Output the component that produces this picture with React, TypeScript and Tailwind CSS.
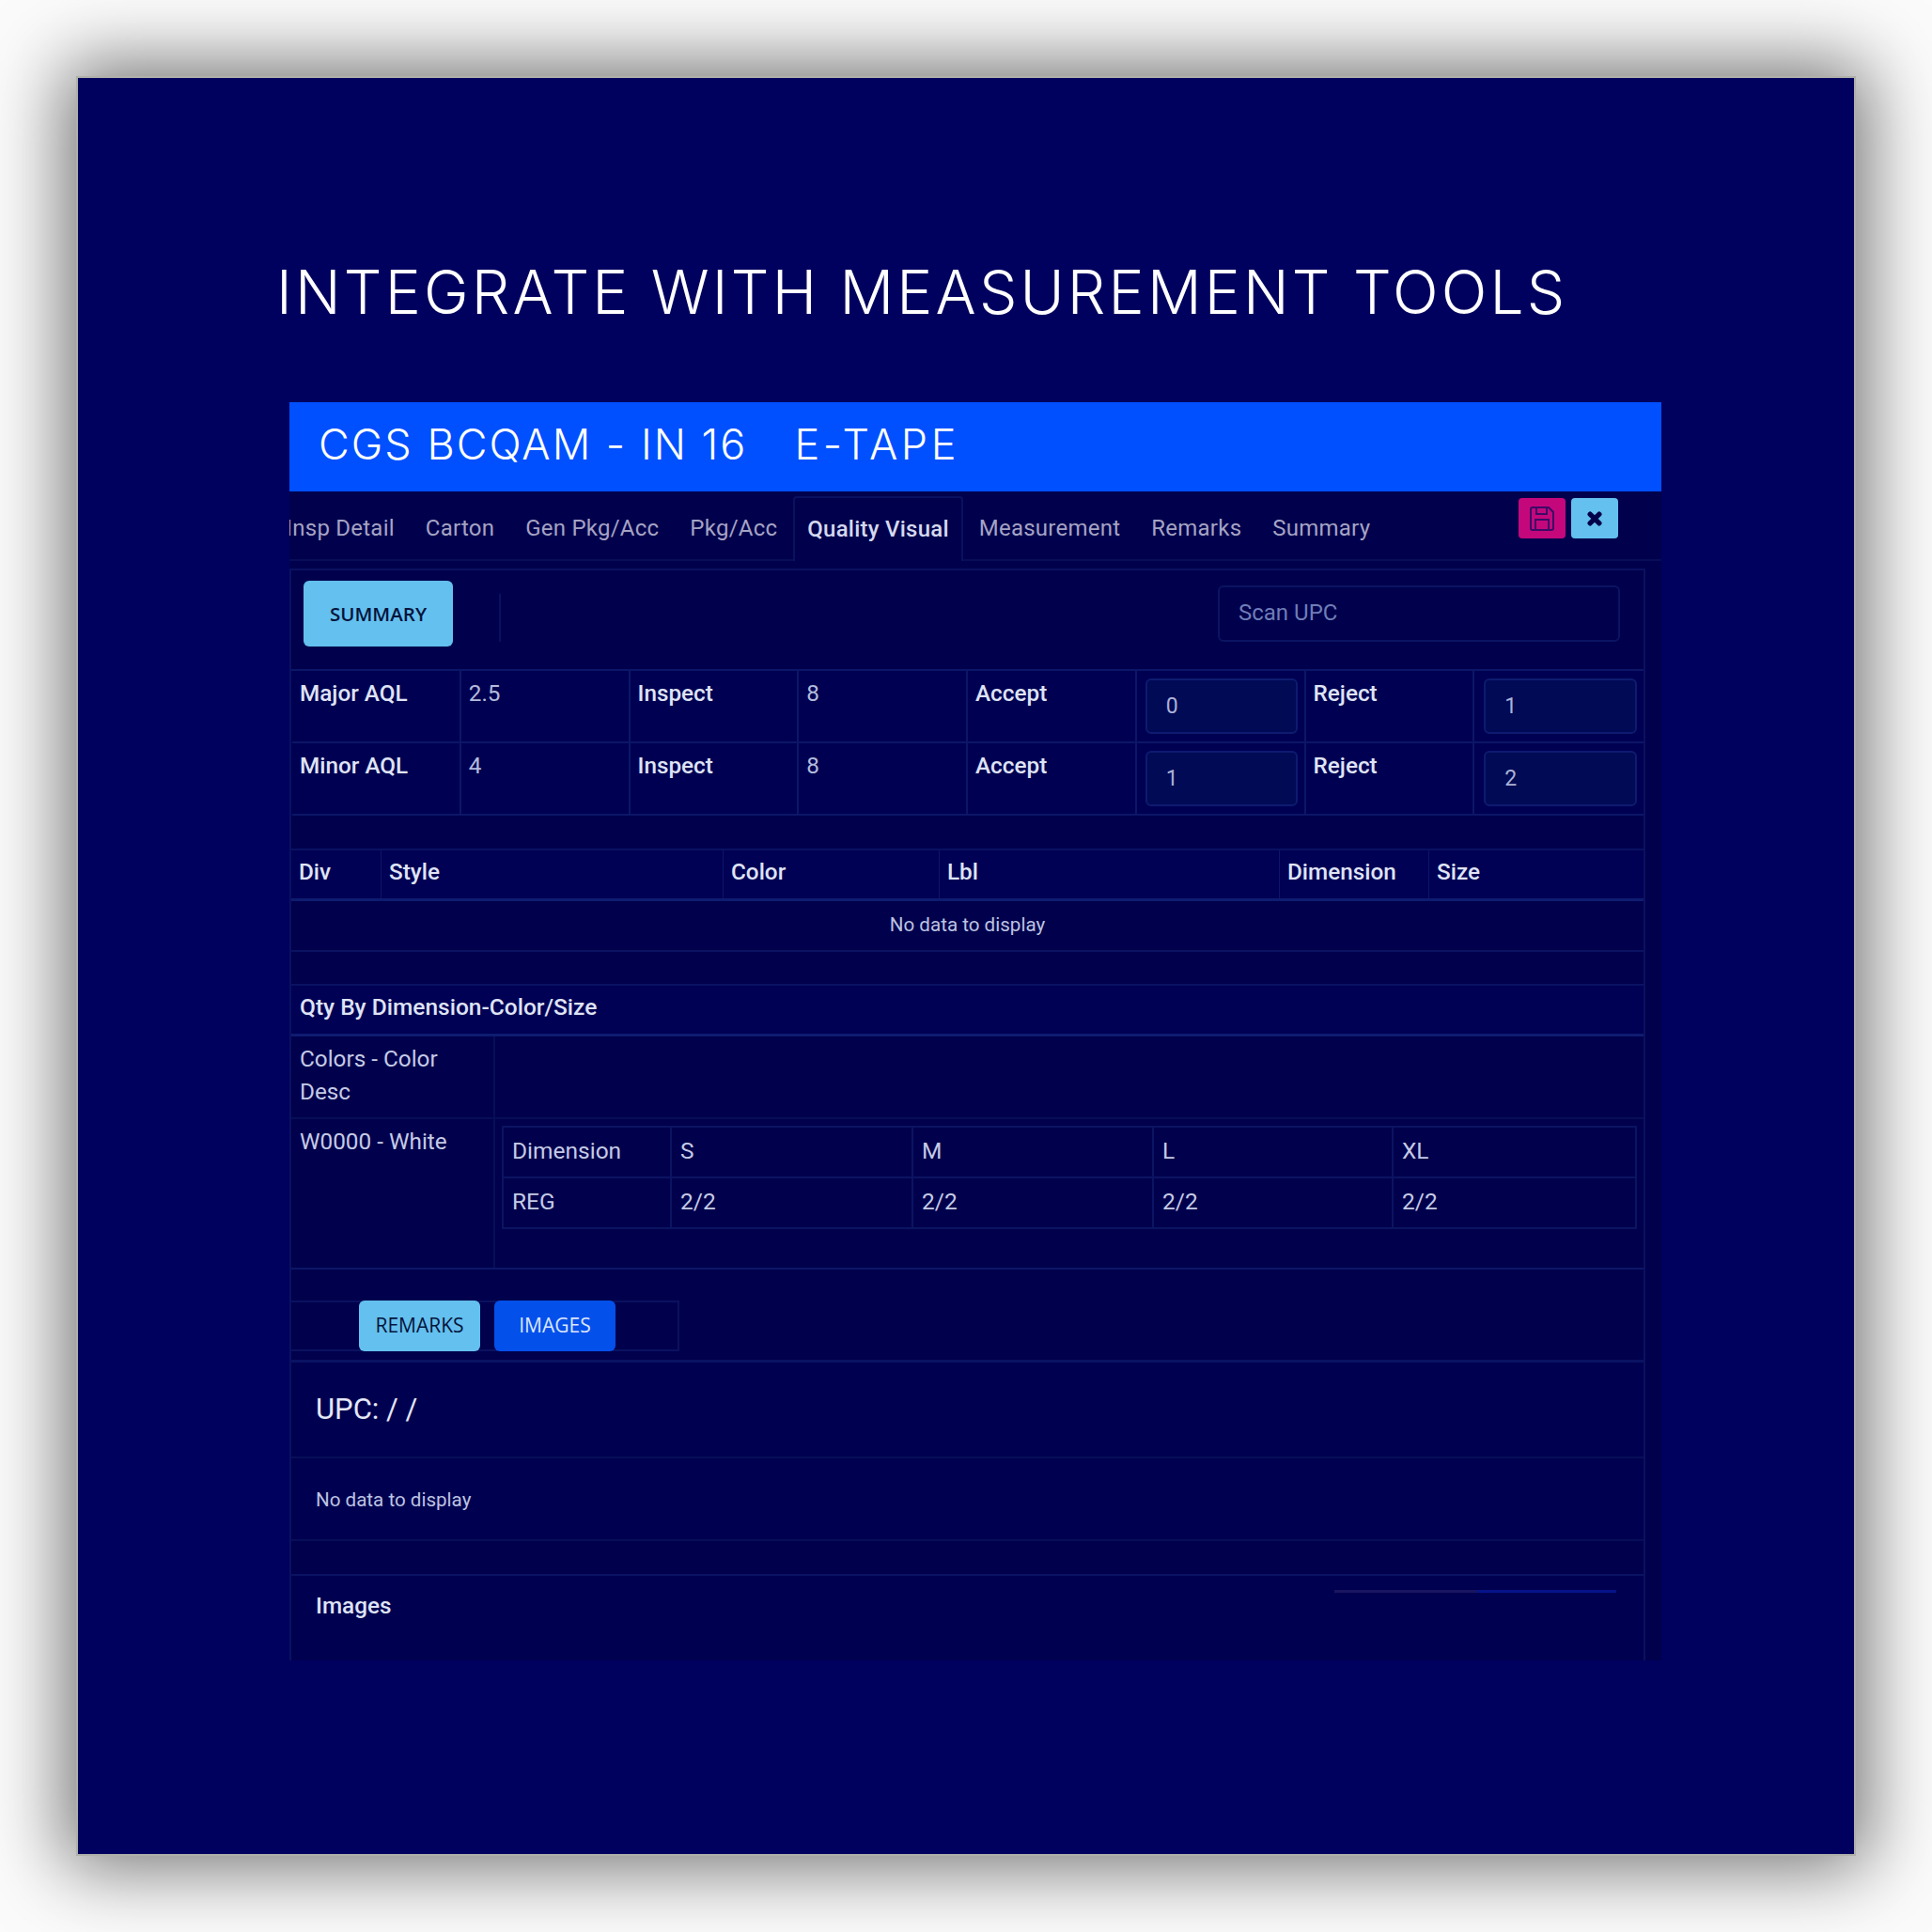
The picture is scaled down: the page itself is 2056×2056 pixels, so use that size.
import { FaTimes } from "react-icons/fa";

const tabs = ["Insp Detail", "Carton", "Gen Pkg/Acc", "Pkg/Acc", "Quality Visual", "Measurement", "Remarks", "Summary"];

function AqlRow({ name, aql, inspect, accept, reject }: { name: string; aql: string; inspect: string; accept: string; reject: string }) {
  const cell = "border-r-2 border-[#0c1668] pl-[8px] pr-[10px] pt-[10px] text-[24.3px] leading-[28px]";
  const box = "h-[59px] rounded-[6px] border-2 border-[#0d1b70] bg-[#000a55] px-[20px] text-[23px] leading-[55px] text-[#aab2d8]";
  return (
    <div className="ml-[1px] grid h-[77px] grid-cols-8 border-b-2 border-[#0c1668]">
      <div className={`${cell} font-medium text-[#dfe3f5]`}>{name}</div>
      <div className={`${cell} text-[#b4bbdc]`}>{aql}</div>
      <div className={`${cell} font-medium text-[#dfe3f5]`}>Inspect</div>
      <div className={`${cell} text-[#b4bbdc]`}>{inspect}</div>
      <div className={`${cell} font-medium text-[#dfe3f5]`}>Accept</div>
      <div className="border-r-2 border-[#0c1668] pl-[9px] pr-[7px] pt-[8px]">
        <div className={box}>{accept}</div>
      </div>
      <div className={`${cell} font-medium text-[#dfe3f5]`}>Reject</div>
      <div className="pl-[10px] pr-[7px] pt-[8px]">
        <div className={box}>{reject}</div>
      </div>
    </div>
  );
}

function SizeRow({ values, last }: { values: string[]; last?: boolean }) {
  return (
    <div className={`grid h-[54px] grid-cols-[179px_257px_256px_255px_257px] ${last ? "" : "border-b-2 border-[#0b1462]"}`}>
      {values.map((v, i) => (
        <div key={i} className={`px-[9px] text-[24.5px] leading-[50px] text-[#c5cae6] ${i < 4 ? "border-r-2 border-[#0b1462]" : ""}`}>
          {v}
        </div>
      ))}
    </div>
  );
}

export default function App() {
  return (
    <div className="h-[2056px] w-[2056px] bg-[#fbfbfb] p-[81px] font-['Roboto',sans-serif]">
      <div className="h-[1894px] w-[1894px] border-2 border-[#b0b0aa] bg-[#00005f] pl-[225px] pr-[205px] pt-[188px] shadow-[0_0_75px_12px_rgba(0,0,0,0.55)]">
        <h1 className="-ml-[14px] whitespace-nowrap font-['Inter',sans-serif] text-[64px] font-light leading-[80px] tracking-[0.05em] text-white">
          INTEGRATE WITH MEASUREMENT TOOLS
        </h1>

        <div className="mt-[77px] w-[1460px] overflow-hidden bg-[#00004c]">
          <div className="flex h-[95px] bg-[#0050ff] pl-[31px] font-['Inter',sans-serif] text-[45px] font-light leading-[90px] text-white">
            <span className="tracking-[0.045em]">CGS BCQAM - IN 16</span>
            <span className="ml-[50px] tracking-[0.08em]">E-TAPE</span>
          </div>

          <div className="flex h-[74px] items-start justify-between border-b-2 border-[#070d58] pr-[46px]">
            <div className="-ml-[20px] flex h-[74px] items-end">
              {tabs.map((t) =>
                t === "Quality Visual" ? (
                  <div key={t} className="h-[69px] rounded-t-[4px] border-x-2 border-t-2 border-[#0a1160] bg-[#00004c] px-[13.5px] text-[24px] font-medium leading-[66px] tracking-[0.01em] text-[#d5d9ef]">
                    {t}
                  </div>
                ) : (
                  <div key={t} className="h-[69px] px-[16.5px] text-[24px] leading-[69px] tracking-[0.01em] text-[#a5a3c4]">
                    {t}
                  </div>
                ),
              )}
            </div>
            <div className="mt-[7px] flex gap-[6px]">
              <div className="flex h-[43px] w-[50px] items-center justify-center rounded-[4px] bg-[#c4087c] text-[#3d0a66]">
                <svg width="28" height="28" viewBox="0 0 28 28" fill="none" stroke="currentColor" strokeWidth="2">
                  <path d="M4 2h17l5 5v17a2 2 0 0 1-2 2H4a2 2 0 0 1-2-2V4a2 2 0 0 1 2-2z" />
                  <path d="M8 2v7h11V2" />
                  <path d="M7 26V15h14v11" />
                </svg>
              </div>
              <div className="flex h-[43px] w-[50px] items-center justify-center rounded-[4px] bg-[#64c0ee] text-[#00004a]">
                <FaTimes size={20} stroke="currentColor" strokeWidth={40} />
              </div>
            </div>
          </div>

          <div className="mt-[8px] mr-[17px] border-l-2 border-r-2 border-t-2 border-[#0a1160]">
            <div className="flex h-[105px] items-start justify-between pl-[13px] pr-[25px]">
              <div className="flex">
                <div className="mt-[11px] flex h-[70px] w-[159px] items-center justify-center rounded-[6px] bg-[#64c0ee] font-['Open_Sans',sans-serif] text-[20.5px] font-semibold text-[#04143c]">
                  SUMMARY
                </div>
                <div className="ml-[49px] mt-[25px] h-[51px] w-[2px] bg-[#0a1160]" />
              </div>
              <div className="mt-[16px] h-[60px] w-[428px] rounded-[6px] border-2 border-[#0b1462] bg-[#00004c] px-[20px] text-[24px] leading-[54px] text-[#6f7db8]">
                Scan UPC
              </div>
            </div>

            <div className="border-t-2 border-[#0c1668] bg-[#000052]">
              <AqlRow name="Major AQL" aql="2.5" inspect="8" accept="0" reject="1" />
              <AqlRow name="Minor AQL" aql="4" inspect="8" accept="1" reject="2" />
            </div>

            <div className="mt-[35px] border-t-2 border-[#0a1262]">
              <div className="grid h-[54px] grid-cols-[96px_364px_230px_362px_159px_1fr] border-b-[3px] border-[#0e1c70] bg-[#000054] text-[24.3px] font-medium leading-[46px] text-[#dfe3f5]">
                {["Div", "Style", "Color", "Lbl", "Dimension", "Size"].map((h, i) => (
                  <div key={h} className={`pl-[8px] pr-[9px] ${i < 5 ? "border-r border-[#0c1668]" : ""}`}>
                    {h}
                  </div>
                ))}
              </div>
              <div className="h-[54px] border-b-2 border-[#0a1262] text-center text-[20.6px] leading-[50px] text-[#bcc3e2]">
                No data to display
              </div>
            </div>

            <div className="mt-[34px] border-t-2 border-[#0a1262]">
              <div className="h-[54px] border-b-[3px] border-[#0e1c70] bg-[#000054] px-[9px] text-[24.5px] font-medium leading-[46px] text-[#dfe3f5]">
                Qty By Dimension-Color/Size
              </div>
              <div className="grid h-[88px] grid-cols-[217px_1fr] border-b-2 border-[#070e58]">
                <div className="border-r-2 border-[#070e58] px-[9px] pt-[6px] text-[24.3px] leading-[35px] text-[#c5cae6]">
                  Colors - Color Desc
                </div>
                <div />
              </div>
              <div className="grid h-[160px] grid-cols-[217px_1fr] border-b-2 border-[#0c1668]">
                <div className="border-r-2 border-[#070e58] px-[9px] pt-[6px] text-[24.3px] leading-[35px] text-[#c5cae6]">
                  W0000 - White
                </div>
                <div className="pl-[7px] pr-[11px] pt-[7px]">
                  <div className="h-[110px] border-2 border-[#0b1462]">
                    <SizeRow values={["Dimension", "S", "M", "L", "XL"]} />
                    <SizeRow values={["REG", "2/2", "2/2", "2/2", "2/2"]} last />
                  </div>
                </div>
              </div>
            </div>

            <div className="mt-[33px] flex h-[54px] w-[413px] items-center gap-[15px] border-y-2 border-r-2 border-y-[#0a1160] border-r-[#0a1160] pl-[72px]">
              <div className="flex h-[54px] w-[129px] items-center justify-center rounded-[6px] bg-[#64c0ee] font-['Open_Sans',sans-serif] text-[21px] font-medium text-[#04143c]">
                REMARKS
              </div>
              <div className="flex h-[54px] w-[129px] items-center justify-center rounded-[6px] bg-[#0450ea] font-['Open_Sans',sans-serif] text-[21px] font-medium text-[#dbe6ff]">
                IMAGES
              </div>
            </div>

            <div className="mt-[9px] border-t-[3px] border-[#0a1262] bg-[#000050]">
              <div className="h-[102px] border-b-2 border-[#070e58] px-[26px] text-[31px] leading-[100px] text-[#e4e7f6]">
                UPC: / /
              </div>
              <div className="h-[88px] border-b-2 border-[#070e58] px-[26px] text-[20.6px] leading-[88px] text-[#bcc3e2]">
                No data to display
              </div>
            </div>

            <div className="mt-[35px] h-[92px] border-t-2 border-[#0a1262] bg-[#000050] px-[26px]">
              <div className="flex items-start justify-between">
                <div className="pt-[17px] text-[24.3px] font-medium leading-[30px] text-[#dfe3f5]">Images</div>
                <div className="mr-[3px] mt-[15px] flex h-[3px] w-[300px]">
                  <div className="h-full w-[152px] bg-[#1a1560]" />
                  <div className="h-full w-[148px] bg-[#06148a]" />
                </div>
              </div>
            </div>
          </div>
        </div>
      </div>
    </div>
  );
}
